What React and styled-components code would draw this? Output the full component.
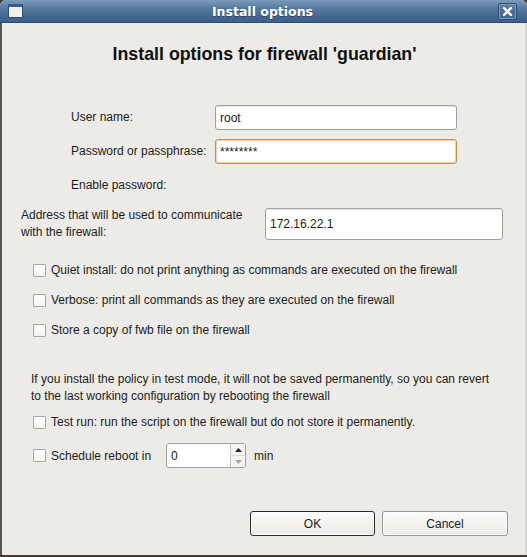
import React from 'react'
import styled, { createGlobalStyle } from 'styled-components'

const Global = createGlobalStyle`
  html, body { margin: 0; padding: 0; background: #3b3b3b; }
  body { font-family: "Liberation Sans", Arial, sans-serif; font-size: 12px; color: #1c1c1c; }
`

const Window = styled.div`
  width: 527px;
  height: 557px;
  display: flex;
  flex-direction: column;
  box-sizing: border-box;
  border-radius: 6px 6px 0 0;
  overflow: hidden;
  background: #edebe7;
  border-bottom: 2px solid #4a3a30;
`

const TitleBar = styled.div`
  height: 23px;
  flex: none;
  display: flex;
  align-items: center;
  padding: 0 8px;
  box-sizing: border-box;
  background: linear-gradient(#7d9cbd 0%, #587b9f 35%, #466990 70%, #3e6088 100%);
  border-bottom: 1px solid #2d4b6e;
`

const WinIcon = styled.div`
  width: 13px;
  height: 10px;
  border: 1px solid #2e4d72;
  border-top: 3px solid #3a5f8c;
  background: #f0eeea;
`

const TitleText = styled.div`
  flex: 1;
  text-align: center;
  font-family: "DejaVu Sans", sans-serif;
  font-weight: bold;
  font-size: 12.5px;
  color: #fff;
  text-shadow: 0 1px 1px #2a4466;
  padding-left: 4px;
`

const CloseBtn = styled.div`
  width: 19px;
  height: 17px;
  margin-right: 2px;
  box-sizing: border-box;
  border: 1px solid #2f4d72;
  border-radius: 2px;
  background: linear-gradient(#5d7fa4, #42648b);
  box-shadow: inset 0 0 0 1px #7d9cbd;
  display: flex;
  align-items: center;
  justify-content: center;
`

const Body = styled.div`
  flex: 1;
  display: flex;
  flex-direction: column;
  border-left: 2px solid #555;
  border-right: 2px solid #d8d6d2;
  padding: 20px 17px 0 19px;
`

const Heading = styled.h1`
  margin: 0;
  text-align: center;
  font-size: 17.8px;
  line-height: 22px;
  font-weight: bold;
  color: #111;
`

const CredGrid = styled.div`
  display: grid;
  grid-template-columns: 144px 242px;
  grid-auto-rows: 25px;
  row-gap: 9px;
  align-items: center;
  margin: 40px 0 0 50px;
`

const Label = styled.span`
  line-height: 16.5px;
`

const TextInput = styled.div`
  height: ${p => p.$h || 25}px;
  box-sizing: border-box;
  border: 1px solid ${p => (p.$focus ? '#c98a4c' : '#a4a19c')};
  border-radius: 3px;
  background: #fff;
  padding: 0 4px;
  display: flex;
  align-items: center;
  box-shadow: ${p => (p.$focus ? 'inset 0 0 0 1px #f3d4b0' : 'inset 0 1px 1px #e6e4e0')};
  font-size: 12px;
`

const AddressRow = styled.div`
  display: grid;
  grid-template-columns: 244px 238px;
  align-items: center;
  margin-top: 9px;
`

const Options = styled.div`
  display: flex;
  flex-direction: column;
  gap: ${p => p.$gap || 16}px;
  margin-top: ${p => p.$top || 0}px;
  padding-left: 12px;
`

const CheckRow = styled.label`
  display: flex;
  align-items: center;
  gap: 5px;
  height: 14px;
`

const Box = styled.span`
  width: 13px;
  height: 13px;
  box-sizing: border-box;
  border: 1px solid #a9a6a1;
  border-radius: 1px;
  background: linear-gradient(#fff, #f4f3f1);
  flex: none;
`

const Note = styled.p`
  margin: 34px 0 0 10px;
  line-height: 16.5px;
`

const Spin = styled.div`
  width: 80px;
  height: 25px;
  margin-left: 10px;
  margin-right: 3px;
  box-sizing: border-box;
  border: 1px solid #a4a19c;
  border-radius: 3px;
  background: #fff;
  display: flex;
`

const SpinValue = styled.div`
  flex: 1;
  display: flex;
  align-items: center;
  padding-left: 4px;
`

const SpinArrows = styled.div`
  width: 14px;
  border-left: 1px solid #c8c5c0;
  display: flex;
  flex-direction: column;
  background: #f5f4f2;
  border-radius: 0 2px 2px 0;
`

const Arrow = styled.div`
  flex: 1;
  display: flex;
  align-items: center;
  justify-content: center;
  & + & { border-top: 1px solid #d8d6d2; }
`

const ScheduleRow = styled(CheckRow)`
  height: 25px;
`

const Buttons = styled.div`
  margin-top: auto;
  margin-bottom: 19px;
  display: flex;
  justify-content: flex-end;
  gap: 7px;
`

const Button = styled.button`
  width: ${p => p.$w}px;
  height: 25px;
  box-sizing: border-box;
  font-family: "Liberation Sans", Arial, sans-serif;
  font-size: 12px;
  color: #1c1c1c;
  border: 1px solid ${p => (p.$default ? '#2b2b2b' : '#9a9792')};
  border-radius: 3px;
  background: linear-gradient(#fbfbfa, #eceae6);
  box-shadow: inset 0 0 0 1px #fff;
`

function Check({ children }) {
  return (
    <CheckRow>
      <Box />
      <span>{children}</span>
    </CheckRow>
  )
}

export default function App() {
  return (
    <>
      <Global />
      <Window>
        <TitleBar>
          <WinIcon />
          <TitleText>Install options</TitleText>
          <CloseBtn>
            <svg width="11" height="11" viewBox="0 0 11 11">
              <path d="M2 2 L9 9 M9 2 L2 9" stroke="#fff" strokeWidth="2.4" strokeLinecap="round" />
            </svg>
          </CloseBtn>
        </TitleBar>
        <Body>
          <Heading>Install options for firewall 'guardian'</Heading>

          <CredGrid>
            <Label>User name:</Label>
            <TextInput>root</TextInput>
            <Label>Password or passphrase:</Label>
            <TextInput $focus>********</TextInput>
            <Label>Enable password:</Label>
          </CredGrid>

          <AddressRow>
            <Label>
              Address that will be used to communicate
              <br />
              with the firewall:
            </Label>
            <TextInput $h={32}>172.16.22.1</TextInput>
          </AddressRow>

          <Options $top={23} $gap={16}>
            <Check>Quiet install: do not print anything as commands are executed on the firewall</Check>
            <Check>Verbose: print all commands as they are executed on the firewall</Check>
            <Check>Store a copy of fwb file on the firewall</Check>
          </Options>

          <Note>
            If you install the policy in test mode, it will not be saved permanently, so you can revert
            <br />
            to the last working configuration by rebooting the firewall
          </Note>

          <Options $top={11} $gap={14}>
            <Check>Test run: run the script on the firewall but do not store it permanently.</Check>
            <ScheduleRow>
              <Box />
              <span>Schedule reboot in</span>
              <Spin>
                <SpinValue>0</SpinValue>
                <SpinArrows>
                  <Arrow>
                    <svg width="7" height="4" viewBox="0 0 7 4"><path d="M0 4 L3.5 0 L7 4Z" fill="#222" /></svg>
                  </Arrow>
                  <Arrow>
                    <svg width="7" height="4" viewBox="0 0 7 4"><path d="M0 0 L3.5 4 L7 0Z" fill="#a9a6a1" /></svg>
                  </Arrow>
                </SpinArrows>
              </Spin>
              <span>min</span>
            </ScheduleRow>
          </Options>

          <Buttons>
            <Button $w={125} $default>OK</Button>
            <Button $w={126}>Cancel</Button>
          </Buttons>
        </Body>
      </Window>
    </>
  )
}
